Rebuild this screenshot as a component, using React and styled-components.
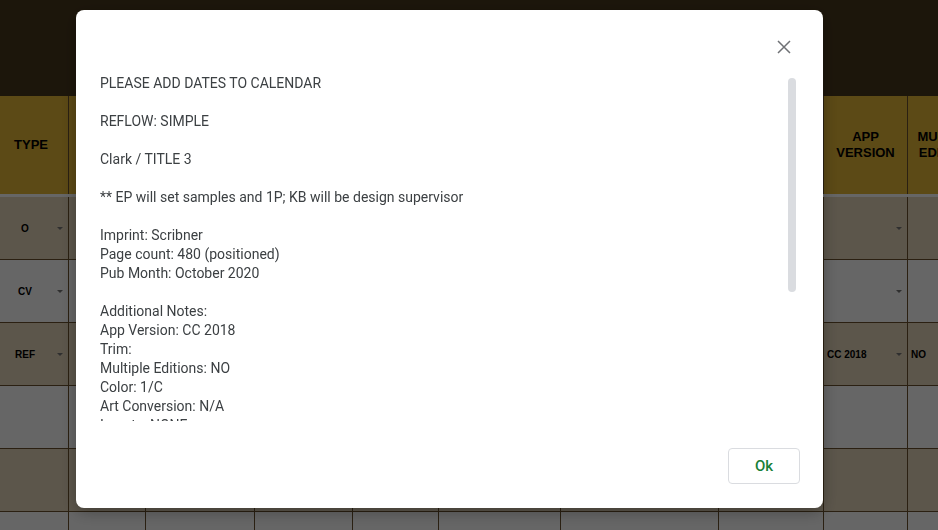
import styled, { createGlobalStyle } from "styled-components";

const GlobalStyle = createGlobalStyle`
  html, body {
    margin: 0;
    padding: 0;
    overflow: hidden;
  }
  body {
    font-family: "Liberation Sans", Arial, sans-serif;
  }
  * {
    box-sizing: border-box;
  }
`;

const columns = [
  { label: "TYPE", width: 69 },
  { label: "TITLE", width: 77 },
  { label: "AUTHOR", width: 109 },
  { label: "ISBN", width: 98 },
  { label: "EDITOR", width: 86 },
  { label: "DESIGN", width: 122 },
  { label: "NOTES", width: 158 },
  { label: "TRIM", width: 105 },
  { label: "APP VERSION", width: 84 },
  { label: "MULTIPLE EDITIONS", width: 84 },
  { label: "COLOR", width: 90 },
];

// one entry per row, keyed by column index
const rows = [
  { 0: { value: "O", caret: true }, 8: { value: "", caret: true } },
  { 0: { value: "CV", caret: true }, 8: { value: "", caret: true } },
  { 0: { value: "REF", caret: true }, 8: { value: "CC 2018", caret: true }, 9: { value: "NO" } },
  {},
  {},
  {},
];

const notes = `PLEASE ADD DATES TO CALENDAR

REFLOW: SIMPLE

Clark / TITLE 3

** EP will set samples and 1P; KB will be design supervisor

Imprint: Scribner
Page count: 480 (positioned)
Pub Month: October 2020

Additional Notes:
App Version: CC 2018
Trim:
Multiple Editions: NO
Color: 1/C
Art Conversion: N/A
Inserts: NONE
Ebook: YES
Index: NO
Endpapers: NONE

Schedule:
Samples due: TBD
1P due: TBD
2P due: TBD
Files to printer: TBD`;

const App = () => {
  const template = columns.map((c) => `${c.width}px`).join(" ");

  return (
    <Page>
      <GlobalStyle />
      <TopBand />
      <Sheet $template={template}>
        {columns.map((col, c) => (
          <HeadCell key={col.label} $first={c === 0}>
            {col.label}
          </HeadCell>
        ))}
        <Divider />
        {rows.map((row, r) =>
          columns.map((col, c) => {
            const cell = row[c];
            const centered = c === 0;
            return (
              <Cell key={`${r}-${c}`} $odd={r % 2 === 1}>
                {cell && (
                  <>
                    <Value $center={centered}>{cell.value}</Value>
                    {cell.caret && <Caret />}
                  </>
                )}
              </Cell>
            );
          })
        )}
      </Sheet>

      <Backdrop>
        <Dialog>
          <DialogHeader>
            <CloseButton aria-label="Close">
              <svg width="14" height="14" viewBox="0 0 14 14">
                <path
                  d="M1 1 L13 13 M13 1 L1 13"
                  stroke="#6f7175"
                  strokeWidth="1.5"
                  fill="none"
                />
              </svg>
            </CloseButton>
          </DialogHeader>
          <ScrollArea>
            <NotesText>{notes}</NotesText>
            <ScrollTrack>
              <ScrollThumb $size={214} />
            </ScrollTrack>
          </ScrollArea>
          <DialogFooter>
            <OkButton>Ok</OkButton>
          </DialogFooter>
        </Dialog>
      </Backdrop>
    </Page>
  );
};

export default App;

const Page = styled.div`
  position: relative;
  width: 100%;
  height: 530px;
  overflow: hidden;
  background: #ffffff;
`;

const TopBand = styled.div`
  height: 96px;
  background: #48381d;
`;

const Sheet = styled.div`
  display: grid;
  grid-template-columns: ${(p) => p.$template};
`;

const HeadCell = styled.div`
  height: 98px;
  display: flex;
  align-items: center;
  justify-content: center;
  padding: ${(p) => (p.$first ? "0 8px 0 2px" : "0 6px")};
  overflow: hidden;
  text-align: center;
  background: #e6b837;
  border-right: 1px solid #6b522e;
  color: #000;
  font-weight: bold;
  font-size: 13px;
  line-height: 16px;
`;

const Divider = styled.div`
  grid-column: 1 / -1;
  height: 3px;
  background: #ffffff;
`;

const Cell = styled.div`
  height: 63px;
  display: flex;
  align-items: center;
  padding: 0 5px 0 3px;
  background: ${(p) => (p.$odd ? "#ffffff" : "#e6d7bc")};
  border-right: 1px solid #6b522e;
  border-bottom: 1px solid #6b522e;
  color: #000;
  font-weight: bold;
  font-size: 10px;
`;

const Value = styled.span`
  flex: 1;
  text-align: ${(p) => (p.$center ? "center" : "left")};
  padding-right: ${(p) => (p.$center ? "10px" : "0")};
  white-space: nowrap;
`;

const Caret = styled.span`
  width: 0;
  height: 0;
  border-left: 3px solid transparent;
  border-right: 3px solid transparent;
  border-top: 3px solid #777777;
`;

const Backdrop = styled.div`
  position: fixed;
  inset: 0;
  display: flex;
  align-items: flex-start;
  padding: 10px 0 0 76px;
  background: rgba(0, 0, 0, 0.6);
`;

const Dialog = styled.div`
  width: 747px;
  height: 498px;
  display: flex;
  flex-direction: column;
  padding: 21px 23px 24px 24px;
  background: #ffffff;
  border-radius: 8px;
  box-shadow: 0 4px 16px rgba(0, 0, 0, 0.3);
  font-family: Roboto, "Noto Sans", sans-serif;
`;

const DialogHeader = styled.div`
  display: flex;
  justify-content: flex-end;
  height: 32px;
`;

const CloseButton = styled.button`
  width: 32px;
  height: 32px;
  display: grid;
  place-items: center;
  padding: 0;
  border: none;
  background: none;
  cursor: pointer;
`;

const ScrollArea = styled.div`
  margin-top: 11px;
  height: 347px;
  display: flex;
`;

const NotesText = styled.div`
  flex: 1;
  overflow: hidden;
  white-space: pre-wrap;
  color: #3c4043;
  font-size: 14px;
  line-height: 19px;
`;

const ScrollTrack = styled.div`
  width: 8px;
  margin-right: 4px;
  padding-top: 4px;
`;

const ScrollThumb = styled.div`
  width: 8px;
  height: ${(p) => p.$size}px;
  border-radius: 4px;
  background: #dadce0;
`;

const DialogFooter = styled.div`
  margin-top: 27px;
  display: flex;
  justify-content: flex-end;
`;

const OkButton = styled.button`
  width: 72px;
  height: 36px;
  border: 1px solid #dadce0;
  border-radius: 4px;
  background: #ffffff;
  color: #188038;
  font-family: Roboto, "Noto Sans", sans-serif;
  font-weight: 500;
  font-size: 15px;
  cursor: pointer;
`;
